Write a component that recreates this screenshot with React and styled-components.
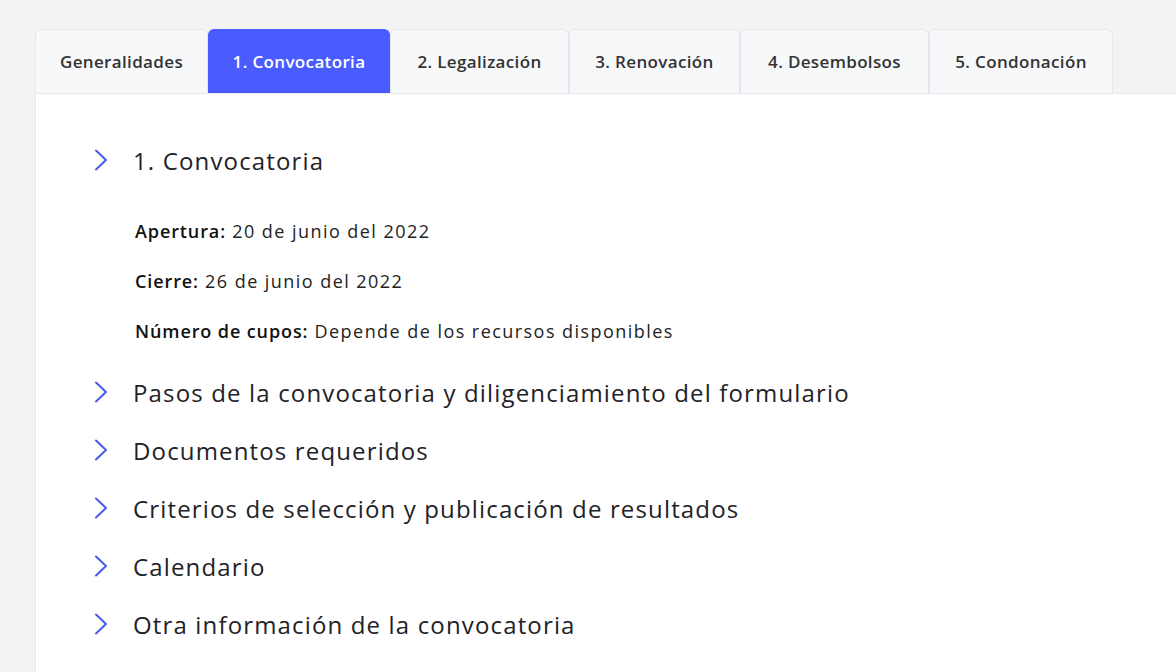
import React from 'react';
import styled, { createGlobalStyle } from 'styled-components';

const GlobalStyle = createGlobalStyle`
	body {
		margin: 0;
		background: #f3f3f3;
		font-family: 'Open Sans', 'Noto Sans', sans-serif;
	}
`;

const Page = styled.div`
	padding: 29px 0 0 35px;
	height: 672px;
	box-sizing: border-box;
	overflow: hidden;
`;

const TabBar = styled.div`
	display: flex;
	align-items: flex-end;
`;

const Tab = styled.div`
	width: ${p => p.$w}px;
	height: 64px;
	box-sizing: border-box;
	display: flex;
	align-items: center;
	justify-content: center;
	font-size: 17px;
	font-weight: 600;
	letter-spacing: 0.35px;
	border-radius: 6px 6px 0 0;
	border: 1px solid ${p => (p.$active ? '#4a5cff' : '#e6e7ec')};
	border-bottom: none;
	background: ${p => (p.$active ? '#4a5cff' : '#f7f8fa')};
	color: ${p => (p.$active ? '#ffffff' : '#333333')};
	white-space: nowrap;
`;

const Panel = styled.div`
	background: #ffffff;
	border-left: 1px solid #e6e7ec;
	border-top: 1px solid #e8e9ee;
	padding: 46px 0 40px 58px;
	min-height: 600px;
`;

const Section = styled.div`
	margin-bottom: ${p => p.$gap}px;
`;

const Header = styled.div`
	display: flex;
	align-items: center;
	gap: 25px;
	height: 40px;
`;

const Title = styled.span`
	font-size: 24px;
	font-weight: 500;
	color: #222228;
	letter-spacing: 1.15px;
`;

const Details = styled.div`
	padding: 40px 0 0 41px;
	display: flex;
	flex-direction: column;
	gap: 27px;
`;

const Line = styled.p`
	margin: 0;
	font-size: 18px;
	line-height: 23px;
	color: #222;
	letter-spacing: 1.45px;
	b {
		font-weight: 600;
		color: #111;
		letter-spacing: 0.9px;
	}
`;

const Chevron = () => (
	<svg width="14" height="22" viewBox="0 0 14 22" fill="none">
		<path d="M2 1.5 L12 11 L2 20.5" stroke="#4b5aec" strokeWidth="2" strokeLinecap="round" strokeLinejoin="round" />
	</svg>
);

const tabs = [
	{ label: 'Generalidades', w: 173 },
	{ label: '1. Convocatoria', w: 182, active: true },
	{ label: '2. Legalización', w: 179 },
	{ label: '3. Renovación', w: 171 },
	{ label: '4. Desembolsos', w: 189 },
	{ label: '5. Condonación', w: 184 },
];

const sections = [
	'Pasos de la convocatoria y diligenciamiento del formulario',
	'Documentos requeridos',
	'Criterios de selección y publicación de resultados',
	'Calendario',
	'Otra información de la convocatoria',
];

const App = () => (
	<>
		<GlobalStyle />
		<Page>
			<TabBar>
				{tabs.map(t => (
					<Tab key={t.label} $active={t.active} $w={t.w}>{t.label}</Tab>
				))}
			</TabBar>
			<Panel>
				<Section $gap={29}>
					<Header>
						<Chevron />
						<Title>1. Convocatoria</Title>
					</Header>
					<Details>
						<Line><b>Apertura:</b> 20 de junio del 2022</Line>
						<Line><b>Cierre:</b> 26 de junio del 2022</Line>
						<Line><b>Número de cupos:</b> Depende de los recursos disponibles</Line>
					</Details>
				</Section>
				{sections.map(s => (
					<Section key={s} $gap={18}>
						<Header>
							<Chevron />
							<Title>{s}</Title>
						</Header>
					</Section>
				))}
			</Panel>
		</Page>
	</>
);

export default App;
